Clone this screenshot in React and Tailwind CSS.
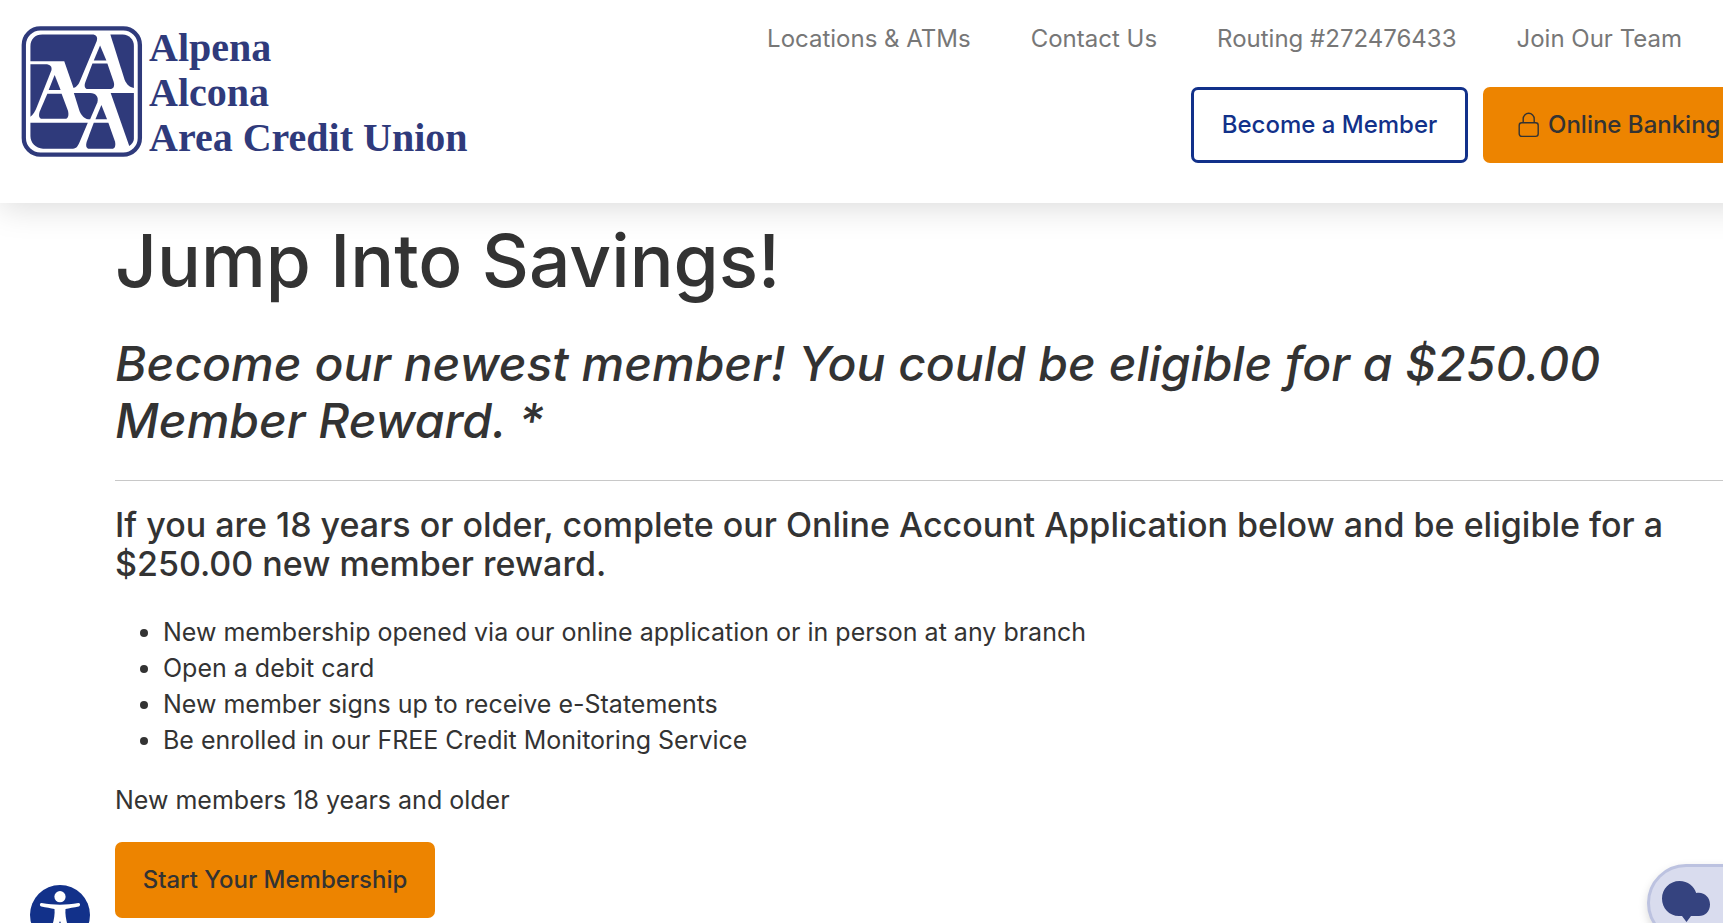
function LogoMark() {
  return (
    <svg viewBox="33 32 365 395" className="h-[131px] w-[122px] shrink-0" aria-hidden="true">
      <rect x="40" y="39" width="350" height="381" rx="50" fill="#fff" stroke="#2f3a7b" strokeWidth="13" />
      <g fill="#2f3a7b">
        <path d="M60 138V94C60 72 74 58 96 58H246C258 58 264 66 260 77L212 192C206 208 200 216 190 219L162 138Z" />
        <path d="M270 91L289 136H251Z" />
        <path d="M247 145H292L311 200C315 214 310 222 300 222H233C224 222 221 212 226 200Z" />
        <path d="M301 58H338C358 58 372 74 372 92V219C358 216 350 208 344 194Z" />
        <path d="M60 147H105C120 147 126 154 123 166L80 275C74 290 68 300 60 306Z" />
        <path d="M133 180L151 225H115Z" />
        <path d="M111 236H154L173 287C177 302 173 312 165 312H95C86 312 84 302 88 290Z" />
        <path d="M191 234H240C258 234 266 246 262 262L240 313H234C222 311 213 300 208 288Z" />
        <path d="M274 270L291 313H256Z" />
        <path d="M251 324H295L315 380C318 394 314 402 306 402H238C228 402 226 392 230 380Z" />
        <path d="M302 234H372V372C372 380 366 388 358 394Z" />
        <path d="M60 324H233L210 378C204 392 200 402 188 402H98C76 402 60 384 60 364Z" />
      </g>
    </svg>
  );
}

function LockIcon() {
  return (
    <svg viewBox="0 0 22 26" className="h-[26px] w-[22px] shrink-0" fill="none" stroke="#333" strokeWidth="1.4" aria-hidden="true">
      <rect x="1.2" y="10.8" width="19" height="13.6" rx="2.6" />
      <path d="M5.2 10.8V6.800a5.500 5.500 0 0 1 11 0v4" />
    </svg>
  );
}

const links = ["Locations & ATMs", "Contact Us", "Routing #272476433", "Join Our Team"];

const requirements = [
  "New membership opened via our online application or in person at any branch",
  "Open a debit card",
  "New member signs up to receive e-Statements",
  "Be enrolled in our FREE Credit Monitoring Service",
];

export default function App() {
  return (
    <div className="h-screen overflow-hidden bg-white font-['Inter','Liberation_Sans',sans-serif] text-[#333]">
      <header className="relative -mr-[34px] flex h-[203px] items-start justify-between bg-white shadow-[0_4px_32px_rgba(0,0,0,0.15)]">
        <a href="#home" className="flex gap-[6px] pt-[26px] pl-[21px] text-[#2f3a7b]">
          <LogoMark />
          <span className="-mt-px flex flex-col font-['Liberation_Serif',serif] text-[40px] leading-[45px] font-bold whitespace-nowrap">
            <span>Alpena</span>
            <span>Alcona</span>
            <span>Area Credit Union</span>
          </span>
        </a>
        <div className="flex flex-col items-end">
          <nav className="flex gap-[60px] pt-5 pr-[75px] text-[24px] leading-[38px] whitespace-nowrap text-[#777]">
            {links.map((label) => (
              <a key={label} href="#nav">{label}</a>
            ))}
          </nav>
          <div className="flex gap-[15px] pt-[29px] text-[24px] font-medium whitespace-nowrap">
            <a href="#join" className="flex h-[76px] w-[277px] items-center justify-center rounded-[7px] border-3 border-[#12318a] text-[#12318a]">
              Become a Member
            </a>
            <button className="flex h-[76px] w-[274px] items-center gap-2 rounded-[7px] bg-[#ed8400] pl-[35px]">
              <LockIcon />
              Online Banking
            </button>
          </div>
        </div>
      </header>

      <main className="pt-5 pl-[115px]">
        <h1 className="text-[73px] leading-[76px] font-medium">Jump Into Savings!</h1>
        <h2 className="mt-9 max-w-[1560px] text-[48px] leading-[57px] font-medium italic">
          Become our newest member! You could be eligible for a $250.00 Member Reward. *
        </h2>
        <hr className="mt-[31px] border-[#c8c8c8]" />
        <h3 className="mt-6 max-w-[1580px] text-[34px] leading-[39px] font-medium">
          If you are 18 years or older, complete our Online Account Application below and be eligible for a $250.00 new member reward.
        </h3>
        <ul className="mt-[31px] list-disc pl-12 text-[25px] leading-9">
          {requirements.map((item) => (
            <li key={item}>{item}</li>
          ))}
        </ul>
        <p className="mt-6 text-[25px] leading-9">New members 18 years and older</p>
        <button className="mt-6 h-[76px] w-[320px] rounded-[7px] bg-[#ed8400] text-[24px] font-medium">
          Start Your Membership
        </button>
      </main>

      <button aria-label="Accessibility options" className="fixed -bottom-[22px] left-[30px] size-[60px] rounded-full bg-[#12318a]">
        <svg viewBox="0 0 60 60" fill="#fff" aria-hidden="true">
          <circle cx="30" cy="11.7" r="5.6" />
          <path d="M11.500 18C18 19 24 19.700 30 19.700S42 19 48.500 18C50.500 17.800 50.500 21 48.700 21.600C44 22.700 39 23.300 35.500 24C35 29 36 34 37.500 40L40 50H36L30 36L24 50H20L22.500 40C24 34 25 29 24.500 24C21 23.300 16 22.700 11.300 21.600C9.500 21 9.500 17.800 11.500 18Z" />
        </svg>
      </button>
      <button aria-label="Open chat" className="fixed -right-[44px] -bottom-[19px] h-[78px] w-[120px] rounded-full border-3 border-[#bcc2e0] bg-[#d9dcee] pl-3 shadow-[0_4px_10px_rgba(0,0,0,0.15)]">
        <svg viewBox="0 0 48 44" className="h-[44px] w-[48px]" fill="#35437f" aria-hidden="true">
          <path d="M17.500 0C26 0 32 5 34.200 12C42 10.500 48 16 48 23.500C48 30.500 43 35 37 35H29L24.500 41L20 35H17C7 35 0 27 0 17.500S7.500 0 17.500 0Z" />
        </svg>
      </button>
    </div>
  );
}
